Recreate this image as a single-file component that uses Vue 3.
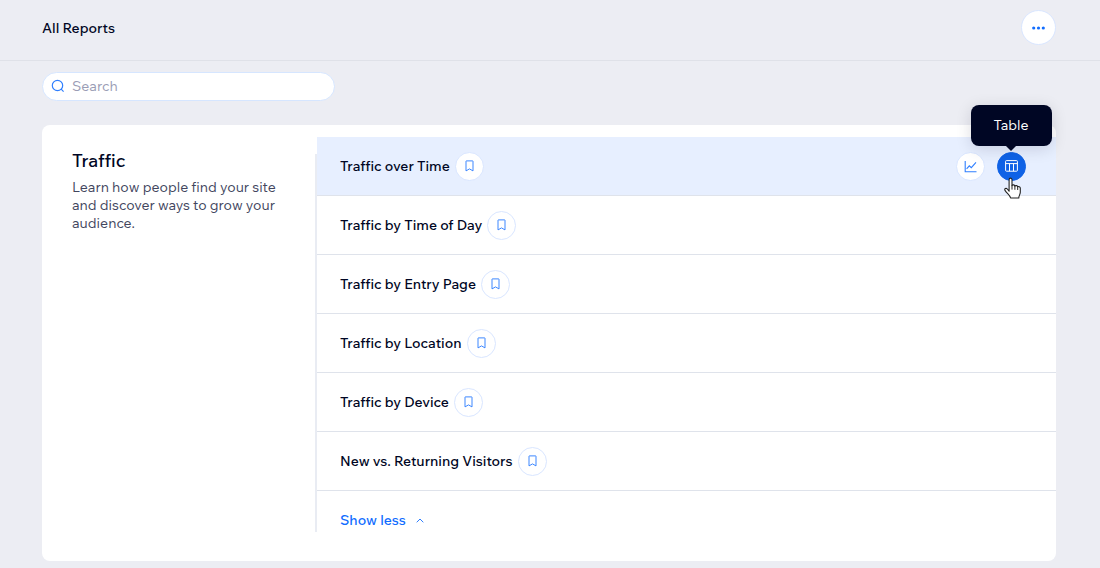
<script setup>
import { ref } from 'vue'

const query = ref('')
const reports = [
  { name: 'Traffic over Time', active: true },
  { name: 'Traffic by Time of Day' },
  { name: 'Traffic by Entry Page' },
  { name: 'Traffic by Location' },
  { name: 'Traffic by Device' },
  { name: 'New vs. Returning Visitors' },
]
</script>

<template>
  <div class="page">
    <header class="topbar">
      <h1 class="page-title">All Reports</h1>
      <button class="round more" type="button" aria-label="More actions">
        <svg width="13" height="4" viewBox="0 0 13 4" fill="#116dff">
          <circle cx="1.7" cy="2" r="1.6" /><circle cx="6.5" cy="2" r="1.6" /><circle cx="11.3" cy="2" r="1.6" />
        </svg>
      </button>
    </header>

    <main class="content">
      <label class="search">
        <svg width="14" height="14" viewBox="0 0 14 14" fill="none" stroke="#2f7fff" stroke-width="1.2">
          <circle cx="6.5" cy="6.5" r="5.2" /><path d="M10.2 10.2 12.6 12.6" />
        </svg>
        <input v-model="query" type="text" placeholder="Search" aria-label="Search" />
      </label>

      <section class="card">
        <div class="intro">
          <h2>Traffic</h2>
          <p>Learn how people find your site and discover ways to grow your audience.</p>
        </div>
        <div class="divider"></div>
        <div class="list">
          <ul>
            <li v-for="r in reports" :key="r.name" class="row" :class="{ active: r.active }">
              <a href="#" class="name">{{ r.name }}</a>
              <button class="round mark" type="button" :aria-label="'Bookmark ' + r.name">
                <svg width="9" height="12" viewBox="0 0 9 12" fill="none" stroke="#3d87ff" stroke-width="1">
                  <path d="M1.3.9h6.4q.3 0 .3.3v9.7L4.5 8.9 1 10.9V1.2q0-.3.3-.3z" />
                </svg>
              </button>
              <div v-if="r.active" class="actions">
                <button class="round chart" type="button" aria-label="Chart">
                  <svg width="13" height="13" viewBox="0 0 13 13" fill="none" stroke="#2f7fff" stroke-width="1.1">
                    <path d="M1.2 1v10.8H12.5M2.6 8.8 5.3 5.8 7.3 7.6 12 2.4" />
                  </svg>
                </button>
                <div class="table-wrap">
                  <button class="round table" type="button" aria-label="Table" aria-describedby="tip">
                    <svg width="13" height="12" viewBox="0 0 13 12" fill="none" stroke="#fff" stroke-width="1">
                      <rect x=".6" y=".6" width="11.8" height="10.6" rx=".8" />
                      <path d="M.6 3.6h11.8M4.5 3.6v7.6M8.5 3.6v7.6" />
                    </svg>
                  </button>
                  <div id="tip" class="tooltip" role="tooltip">Table</div>
                  <svg class="cursor" width="19" height="23" viewBox="0 0 19 23">
                    <path
                      d="M6.1 14.2V2.8C6.1.6 9 .6 9 2.8v5.8c.6-1.1 2.6-.9 2.9.5.7-.9 2.5-.6 2.8.7.9-.7 2.6-.2 2.6 1.4v4.1c0 2.1-1.5 3.2-1.5 5.7H7.6c-.4-2.8-3.8-4.6-5.6-7.6-1-1.7 1-2.8 2.3-1.4z"
                      fill="#fff" stroke="#222" stroke-width="1.1" stroke-linejoin="round" />
                    <path d="M9 8.6v3.6M11.9 9.1v3.3M14.7 9.9v2.7" fill="none" stroke="#222" stroke-linecap="round" />
                  </svg>
                </div>
              </div>
            </li>
          </ul>
          <button class="less" type="button">
            Show less
            <svg width="8" height="5" viewBox="0 0 8 5" fill="none" stroke="#2f7fff" stroke-width="1">
              <path d="M.7 4.3 4 1 7.3 4.3" />
            </svg>
          </button>
        </div>
      </section>
    </main>
  </div>
</template>

<style>
body {
  background: #ecedf3;
}
</style>

<style scoped>
.page {
  font-family: 'Wix Madefor Text', Inter, 'Liberation Sans', sans-serif;
  font-size: 14px;
  color: #000624;
}
.page * {
  box-sizing: border-box;
}
button,
input {
  font: inherit;
}
.topbar {
  display: flex;
  align-items: center;
  justify-content: space-between;
  padding: 10px 44px 15px 42px;
  border-bottom: 1px solid #dfe1e8;
}
.page-title {
  margin: 0;
  font-size: 14px;
  font-weight: 500;
}
.round {
  display: flex;
  flex: none;
  align-items: center;
  justify-content: center;
  padding: 0;
  border: 1px solid #d9e6ff;
  border-radius: 50%;
  background: #fff;
  cursor: pointer;
}
.more {
  width: 35px;
  height: 35px;
}
.content {
  padding: 11px 44px 7px 42px;
}
.search {
  display: flex;
  align-items: center;
  gap: 7px;
  width: 293px;
  height: 29px;
  padding: 0 8px 1px;
  border: 1px solid #d6e6ff;
  border-radius: 15px;
  background: #fff;
}
.search svg {
  flex: none;
}
.search input {
  flex: 1;
  min-width: 0;
  padding: 0;
  border: 0;
  outline: 0;
  background: none;
  color: #000624;
}
.search input::placeholder {
  color: #9a9db5;
  opacity: 1;
}
.card {
  display: flex;
  margin-top: 24px;
  padding: 12px 0 29px;
  border-radius: 8px;
  background: #fff;
}
.intro {
  flex: none;
  width: 273px;
  padding: 12px 30px 0 30px;
}
h2 {
  margin: 0;
  font-size: 18px;
  font-weight: 500;
  line-height: 24px;
}
p {
  margin: 5px 0 0;
  line-height: 18px;
  color: #42465e;
}
.divider {
  flex: none;
  width: 2px;
  margin-top: 17px;
  background: #e9ecf3;
}
.list {
  flex: 1;
  min-width: 0;
}
ul {
  margin: 0;
  padding: 0;
  list-style: none;
}
.row {
  display: flex;
  align-items: center;
  gap: 5px;
  height: 59px;
  padding: 0 30px 0 23px;
  border-bottom: 1px solid #dfe3eb;
}
.active {
  background: #e7efff;
}
.name {
  color: inherit;
  font-weight: 500;
  text-decoration: none;
}
.mark,
.chart {
  width: 29px;
  height: 29px;
}
.actions {
  display: flex;
  gap: 12px;
  margin-left: auto;
}
.table-wrap {
  position: relative;
}
.table {
  width: 29px;
  height: 29px;
  border-color: #0f62e6;
  background: #0f62e6;
}
.tooltip {
  position: absolute;
  bottom: 35px;
  left: 50%;
  width: 81px;
  margin-left: -41px;
  border-radius: 8px;
  background: #000624;
  color: #fff;
  line-height: 41px;
  text-align: center;
  box-shadow: 0 3px 16px rgba(0, 6, 36, 0.14);
}
.tooltip::after {
  content: '';
  position: absolute;
  top: 100%;
  left: 50%;
  margin-left: -5px;
  border: 5px solid transparent;
  border-top-color: #000624;
  border-bottom: 0;
}
.cursor {
  position: absolute;
  top: 25px;
  left: 6px;
}
.less {
  display: flex;
  align-items: center;
  gap: 10px;
  margin-top: 18px;
  padding: 0 0 1px 23px;
  border: 0;
  background: none;
  color: #116dff;
  font-weight: 500;
  line-height: 22px;
  cursor: pointer;
}
</style>
